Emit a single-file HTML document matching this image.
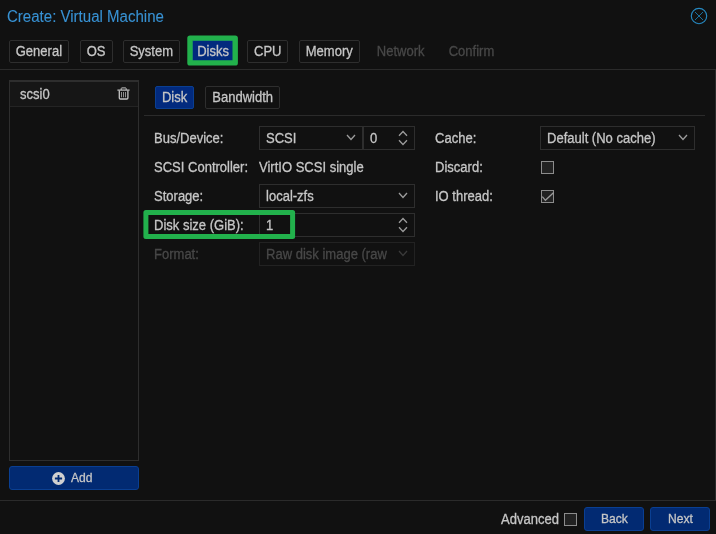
<!DOCTYPE html>
<html><head><meta charset="utf-8">
<style>
*{box-sizing:border-box;margin:0;padding:0}
html,body{width:716px;height:534px;overflow:hidden;background:#111111}
body{font-family:"Liberation Sans",Arial,sans-serif;font-size:14px;color:#c6c6c6;position:relative}
.abs{position:absolute}
.title{left:7px;top:8px;font-size:16px;color:#3892d4;line-height:18px;white-space:nowrap}
.tab{position:absolute;top:40px;height:23px;border:1px solid #2e2e2e;border-radius:2px;line-height:21px;text-align:center;font-size:14px;color:#c6c6c6;white-space:nowrap}
.tab.dis{border-color:transparent;color:#484848}
.tab.act{background:#022a7e;border-color:#0a3f92}

.hline{position:absolute;height:1px;background:#2b2b2b}
.lbl{position:absolute;font-size:14px;line-height:16px;white-space:nowrap;color:#c6c6c6}
.fld{position:absolute;height:24px;border:1px solid #2e2e2e;background:#111;line-height:22px;font-size:14px;padding-left:6px;white-space:nowrap;color:#c6c6c6}
.btn{position:absolute;height:24px;background:#022a72;border:1px solid #0a3f92;border-radius:3px;text-align:center;line-height:22px;font-size:13px;color:#c6c6c6}
.cb{position:absolute;width:13px;height:13px;border:1px solid #8c8c8c;background:#222}
svg{position:absolute;overflow:visible}
.t,.tc{-webkit-text-stroke:0.3px currentColor}
.t{display:inline-block;transform:scaleX(.93);transform-origin:0 50%}
.tc{display:inline-block;transform:scaleX(.93);transform-origin:50% 50%}
#w{position:absolute;left:0;top:0;width:716px;height:534px;will-change:transform}
</style></head><body><div id="w">
<div class="abs title"><span class="t" style="transform:scaleX(.94);-webkit-text-stroke:0.1px currentColor">Create: Virtual Machine</span></div>
<svg style="left:690px;top:7px" width="18" height="18" viewBox="0 0 18 18"><circle cx="9" cy="9" r="7.7" fill="none" stroke="#2688c0" stroke-width="1.15"/><path d="M5 5L13 13M13 5L5 13" stroke="#1c7aae" stroke-width="0.9" fill="none"/></svg>

<div class="tab" style="left:9px;width:60px"><span class="tc">General</span></div>
<div class="tab" style="left:80px;width:33px"><span class="tc">OS</span></div>
<div class="tab" style="left:123px;width:57px"><span class="tc">System</span></div>
<div class="tab act" style="left:192px;width:42px"><span class="tc">Disks</span></div>
<div class="tab" style="left:247px;width:41px"><span class="tc">CPU</span></div>
<div class="tab" style="left:299px;width:61px"><span class="tc">Memory</span></div>
<div class="tab dis" style="left:370px;width:62px"><span class="tc">Network</span></div>
<div class="tab dis" style="left:442px;width:60px"><span class="tc">Confirm</span></div>
<svg style="left:0;top:0" width="716" height="534"><rect x="190" y="38.1" width="45.2" height="24.8" fill="none" stroke="#22b14c" stroke-width="5.4" stroke-linejoin="round"/></svg>

<div class="hline" style="left:0;top:69px;width:716px"></div>

<div class="abs" style="left:715px;top:69px;width:1px;height:432px;background:#2b2b2b"></div>
<!-- left list -->
<div class="abs" style="left:9px;top:80px;width:130px;height:381px;border:1px solid #2e2e2e;border-top-width:2px"></div>
<div class="abs" style="left:10px;top:82px;width:128px;height:24px;background:#161616"></div>
<div class="hline" style="left:10px;top:106px;width:128px;background:#242424"></div>
<div class="lbl" style="left:20px;top:86px"><span class="t">scsi0</span></div>
<svg style="left:116.5px;top:86.5px" width="13" height="13" viewBox="0 0 13 13" fill="none" stroke="#c4c4c4"><path d="M4.2 3V1.6Q4.2 0.9 4.9 0.9H8.5Q9.2 0.9 9.2 1.6V3" stroke-width="1"/><path d="M0.4 3.1H12.6" stroke-width="1.2"/><path d="M2.3 3.6V11Q2.3 12 3.3 12H9.9Q10.9 12 10.9 11V3.6" stroke-width="1.3"/><path d="M4.5 5V10.3M6.5 5V10.3M8.5 5V10.3" stroke="#b0b0b0" stroke-width="0.8"/></svg>
<div class="btn" style="left:9px;top:466px;width:130px;height:24px"><span class="t" style="position:absolute;left:61px;top:0">Add</span></div>
<svg style="left:52px;top:471.5px" width="13" height="13" viewBox="0 0 13 13"><circle cx="6.5" cy="6.5" r="6.4" fill="#d0d0d0"/><path d="M6.5 2.9v7.2M2.9 6.5h7.2" stroke="#022a72" stroke-width="1.8"/></svg>

<!-- sub tabs -->
<div class="tab act" style="left:155px;top:86px;width:39px;height:23px;line-height:20px"><span class="tc">Disk</span></div>
<div class="tab" style="left:205px;top:86px;width:75px;height:23px;line-height:20px"><span class="tc">Bandwidth</span></div>
<div class="hline" style="left:144px;top:115px;width:561px"></div>

<!-- left column -->
<div class="lbl" style="left:154px;top:130px"><span class="t">Bus/Device:</span></div>
<div class="fld" style="left:259px;top:126px;width:104px"><span class="t">SCSI</span></div>
<div class="fld" style="left:363px;top:126px;width:52px"><span class="t">0</span></div>
<div class="lbl" style="left:154px;top:159px"><span class="t">SCSI Controller:</span></div>
<div class="lbl" style="left:259px;top:159px"><span class="t">VirtIO SCSI single</span></div>
<div class="lbl" style="left:154px;top:188px"><span class="t">Storage:</span></div>
<div class="fld" style="left:259px;top:184px;width:156px"><span class="t">local-zfs</span></div>
<div class="lbl" style="left:154px;top:217px"><span class="t">Disk size (GiB):</span></div>
<div class="fld" style="left:259px;top:213px;width:156px"><span class="t">1</span></div>
<div class="lbl" style="left:154px;top:246px;color:#484848"><span class="t">Format:</span></div>
<div class="fld" style="left:259px;top:242px;width:156px;color:#484848;border-color:#222"><span class="t">Raw disk image (raw</span></div>
<svg style="left:0;top:0" width="716" height="534"><rect x="145.9" y="212.5" width="146.7" height="24" fill="none" stroke="#22b14c" stroke-width="5" stroke-linejoin="round"/></svg>

<!-- right column -->
<div class="lbl" style="left:435px;top:130px"><span class="t">Cache:</span></div>
<div class="fld" style="left:540px;top:126px;width:155px"><span class="t">Default (No cache)</span></div>
<div class="lbl" style="left:435px;top:159px"><span class="t">Discard:</span></div>
<div class="cb" style="left:541px;top:161px"></div>
<div class="lbl" style="left:435px;top:188px"><span class="t">IO thread:</span></div>
<div class="cb" style="left:541px;top:190px"></div>

<svg style="left:347px;top:135px" width="8" height="5" viewBox="0 0 8 5"><path d="M0 0L4 4.5L8 0" fill="none" stroke="#9c9c9c" stroke-width="1.3"/></svg>
<svg style="left:399px;top:126px" width="8" height="24" viewBox="0 0 8 24"><path d="M0 9.7L4 5.5L8 9.7M0 14.3L4 18.5L8 14.3" fill="none" stroke="#9c9c9c" stroke-width="1.3"/></svg>
<svg style="left:399px;top:193px" width="8" height="5" viewBox="0 0 8 5"><path d="M0 0L4 4.5L8 0" fill="none" stroke="#9c9c9c" stroke-width="1.3"/></svg>
<svg style="left:399px;top:213px" width="8" height="24" viewBox="0 0 8 24"><path d="M0 9.7L4 5.5L8 9.7M0 14.3L4 18.5L8 14.3" fill="none" stroke="#9c9c9c" stroke-width="1.3"/></svg>
<svg style="left:399px;top:251px" width="8" height="5" viewBox="0 0 8 5"><path d="M0 0L4 4.5L8 0" fill="none" stroke="#3a3a3a" stroke-width="1.3"/></svg>
<svg style="left:679px;top:135px" width="8" height="5" viewBox="0 0 8 5"><path d="M0 0L4 4.5L8 0" fill="none" stroke="#9c9c9c" stroke-width="1.3"/></svg>
<svg style="left:541px;top:190px" width="13" height="13" viewBox="0 0 13 13"><path d="M1.3 6.7L4.4 10.3L12.7 2.6" fill="none" stroke="#9a9a9a" stroke-width="1.3"/></svg>
<!-- footer -->
<div class="hline" style="left:0;top:500px;width:716px"></div>
<div class="lbl" style="left:501px;top:511px"><span class="t">Advanced</span></div>
<div class="cb" style="left:564px;top:513px"></div>
<div class="btn" style="left:584px;top:507px;width:60px"><span class="tc">Back</span></div>
<div class="btn" style="left:650px;top:507px;width:60px"><span class="tc">Next</span></div>
</div></body></html>
